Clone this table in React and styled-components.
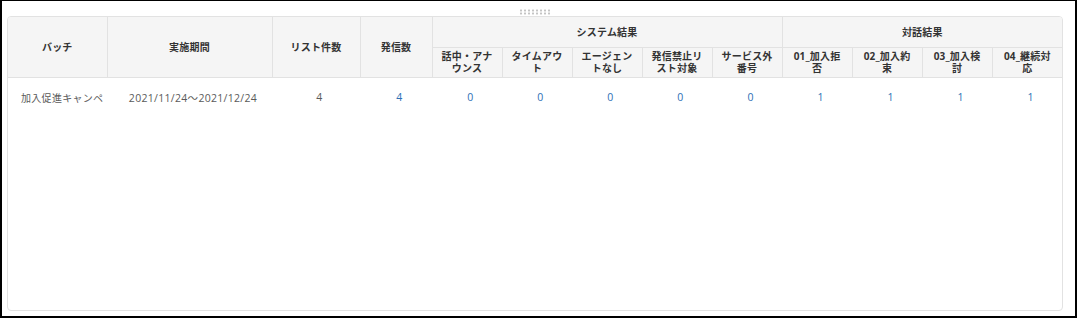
import React from 'react'
import styled, { createGlobalStyle } from 'styled-components'

const GlobalStyle = createGlobalStyle`
    html, body {
        margin: 0;
        padding: 0;
        background: #fff;
    }
    body {
        font-family: "Open Sans", "Noto Sans CJK JP", sans-serif;
    }
`

const Frame = styled.div`
    box-sizing: border-box;
    width: 1077px;
    height: 318px;
    border: 2px solid #000;
    border-top-width: 1px;
    padding: 0 12px 5px 5px;
    display: flex;
    flex-direction: column;
    background: #fff;
`

const HandleBar = styled.div`
    height: 15px;
    display: flex;
    justify-content: center;
    align-items: center;
`

const Grip = styled.div`
    width: 32px;
    height: 6px;
    margin-top: 6px;
    background-image: radial-gradient(circle, #c4c4c4 1px, transparent 1.2px);
    background-size: 4px 3px;
`

const Panel = styled.div`
    flex: 1;
    border: 1px solid #e2e2e2;
    border-radius: 4px;
    overflow: hidden;
    background: #fff;
`

const Table = styled.table`
    width: 100%;
    table-layout: fixed;
    border-collapse: collapse;
    font-size: 10.5px;
`

const Th = styled.th`
    background: #f5f5f5;
    color: #333;
    font-weight: 700;
    font-size: 10px;
    line-height: 12px;
    letter-spacing: 0.2px;
    height: ${p => p.$h}px;
    padding: 0 4px;
    text-align: center;
    white-space: pre-line;
    border-right: 1px solid #e2e2e2;
    border-bottom: 1px solid #e2e2e2;
    box-sizing: border-box;
    &:last-child {
        border-right: none;
    }
`

const Td = styled.td`
    height: 39px;
    padding: ${p => (p.$left ? '0 4px 0 13px' : '0 0 0 7px')};
    font-size: ${p => (p.$left ? '10px' : '10.5px')};
    letter-spacing: 0.3px;
    color: ${p => (p.$link ? '#2d6fb5' : '#5a5a5a')};
    text-align: ${p => (p.$left ? 'left' : 'center')};
    white-space: nowrap;
    overflow: hidden;
`

const widths = [99, 165, 88, 72, 70, 70, 70, 70, 70, 70, 70, 70, null]

const systemCols = ['話中・アナ\nウンス', 'タイムアウ\nト', 'エージェン\nトなし', '発信禁止リ\nスト対象', 'サービス外\n番号']
const talkCols = ['01_加入拒\n否', '02_加入約\n束', '03_加入検\n討', '04_継続対\n応']

const row = {
    batch: '加入促進キャンペ',
    period: '2021/11/24～2021/12/24',
    list: 4,
    calls: 4,
    system: [0, 0, 0, 0, 0],
    talk: [1, 1, 1, 1],
}

const App = () => {
    return (
        <>
            <GlobalStyle />
            <Frame>
                <HandleBar>
                    <Grip />
                </HandleBar>
                <Panel>
                    <Table>
                        <colgroup>
                            {widths.map((w, i) => (
                                <col key={i} style={w ? { width: w } : undefined} />
                            ))}
                        </colgroup>
                        <thead>
                            <tr>
                                <Th $h={30} rowSpan={2}>バッチ</Th>
                                <Th $h={30} rowSpan={2}>実施期間</Th>
                                <Th $h={30} rowSpan={2}>リスト件数</Th>
                                <Th $h={30} rowSpan={2}>発信数</Th>
                                <Th $h={30} colSpan={5}>システム結果</Th>
                                <Th $h={30} colSpan={4}>対話結果</Th>
                            </tr>
                            <tr>
                                {systemCols.map(c => (
                                    <Th $h={30} key={c}>{c}</Th>
                                ))}
                                {talkCols.map(c => (
                                    <Th $h={30} key={c}>{c}</Th>
                                ))}
                            </tr>
                        </thead>
                        <tbody>
                            <tr>
                                <Td $left>{row.batch}</Td>
                                <Td>{row.period}</Td>
                                <Td>{row.list}</Td>
                                <Td $link>{row.calls}</Td>
                                {row.system.map((v, i) => (
                                    <Td $link key={'s' + i}>{v}</Td>
                                ))}
                                {row.talk.map((v, i) => (
                                    <Td $link key={'t' + i}>{v}</Td>
                                ))}
                            </tr>
                        </tbody>
                    </Table>
                </Panel>
            </Frame>
        </>
    )
}

export default App
